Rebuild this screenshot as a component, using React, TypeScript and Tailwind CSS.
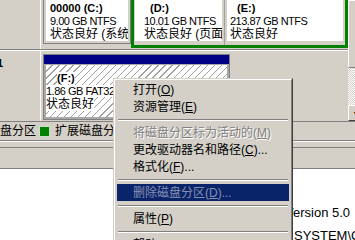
import React from "react";

type Item = {
  label?: string;
  hot?: string;
  dots?: boolean;
  disabled?: boolean;
  active?: boolean;
  sep?: boolean;
};

const menu: Item[] = [
  { label: "打开", hot: "O" },
  { label: "资源管理", hot: "E" },
  { sep: true },
  { label: "将磁盘分区标为活动的", hot: "M", disabled: true },
  { label: "更改驱动器名和路径", hot: "C", dots: true },
  { label: "格式化", hot: "F", dots: true },
  { sep: true },
  { label: "删除磁盘分区", hot: "D", dots: true, disabled: true, active: true },
  { sep: true },
  { label: "属性", hot: "P" },
  { sep: true },
  { label: "帮助", hot: "H" },
];

function ContextMenu() {
  return (
    <div className="absolute left-[113px] top-[78px] w-[180px] border border-t-[#d4d0c8] border-l-[#d4d0c8] border-r-[#404040] border-b-[#404040] bg-[#d4d0c8]">
      <div className="border border-t-white border-l-white border-r-[#808080] border-b-[#808080] px-[2px] pt-[1px] pb-[20px]">
        {menu.map((m, i) =>
          m.sep ? (
            <div key={i} className="h-[9px] flex items-center px-[1px]">
              <div className="w-full h-[2px] border-t border-t-[#808080] border-b border-b-white" />
            </div>
          ) : (
            <div
              key={i}
              className={
                "h-[17px] flex items-center pl-[16px] text-[12px] leading-none whitespace-nowrap " +
                (m.active
                  ? "bg-[#0a246a] text-[#8790b0]"
                  : m.disabled
                  ? "text-[#808080] [text-shadow:1px_1px_0_#ffffff]"
                  : "text-black")
              }
            >
              {m.label}(<u>{m.hot}</u>){m.dots ? "..." : ""}
            </div>
          )
        )}
      </div>
    </div>
  );
}

function Scrollbar() {
  return (
    <div className="w-[16px] shrink-0 flex flex-col">
      <div className="h-[68px] bg-[#d4d0c8] border-l border-t border-l-white border-t-white border-r border-b border-r-[#404040] border-b-[#808080]" />
      <div className="flex-1 bg-[image:repeating-conic-gradient(#ffffff_0%_25%,#d4d0c8_0%_50%)] bg-[length:2px_2px]" />
      <div className="h-[16px] bg-[#d4d0c8] border-l border-t border-l-white border-t-white border-r border-b border-r-[#404040] border-b-[#404040] flex items-center justify-center text-[7px] leading-none text-black">
        ▼
      </div>
    </div>
  );
}

export default function App() {
  return (
    <div className="relative w-[355px] h-[240px] overflow-hidden bg-[#d4d0c8] font-['Liberation_Sans','Noto_Sans_CJK_SC',sans-serif] text-black">
      {/* graphical disk view */}
      <div className="flex h-[121px]">
        <div className="w-[348px] shrink-0 flex flex-col">
          {/* disk 0 (bottom part) */}
          <div className="flex h-[50px] border-b border-[#808080]">
            <div className="w-[41px] shrink-0 border-r border-white" />
            <div className="ml-[2px] flex items-start">
              <div className="w-[88px] h-[44px] border-x border-b border-[#808080] px-[2px] pb-[2px]">
                <div className="h-full bg-white pl-[4px] pt-[2px] overflow-hidden whitespace-nowrap">
                  <div className="h-[13px] leading-[13px] text-[11px] font-bold">00000 (C:)</div>
                  <div className="h-[13px] leading-[13px] text-[11px] tracking-[-0.5px]">9.00 GB NTFS</div>
                  <div className="h-[13px] leading-[13px] text-[12px]">状态良好 (系统)</div>
                </div>
              </div>
              <div className="w-[217px] h-[48px] border-x-[3px] border-b-[3px] border-[#008000] flex">
                <div className="w-[90px] pl-[1px] pr-[2px] pb-[4px]">
                  <div className="h-full bg-white pl-[9px] pt-[2px] overflow-hidden whitespace-nowrap">
                    <div className="h-[13px] leading-[13px] text-[11px] font-bold ml-[6px]">(D:)</div>
                    <div className="h-[13px] leading-[13px] text-[11px] tracking-[-0.5px]">10.01 GB NTFS</div>
                    <div className="h-[13px] leading-[13px] text-[12px]">状态良好 (页面文件)</div>
                  </div>
                </div>
                <div className="flex-1 border-l border-[#a0a0a0] pl-[2px] pr-[2px] pb-[4px]">
                  <div className="h-full bg-white pl-[3px] pt-[2px] overflow-hidden whitespace-nowrap">
                    <div className="h-[13px] leading-[13px] text-[11px] font-bold ml-[7px]">(E:)</div>
                    <div className="h-[13px] leading-[13px] text-[11px] tracking-[-0.5px]">213.87 GB NTFS</div>
                    <div className="h-[13px] leading-[13px] text-[12px]">状态良好</div>
                  </div>
                </div>
              </div>
            </div>
          </div>
          {/* disk 1 */}
          <div className="flex flex-1 border-t border-white">
            <div className="w-[41px] shrink-0 border-r border-white overflow-hidden pt-[6px] whitespace-nowrap">
              <div className="-ml-[28px] h-[13px] leading-[13px] text-[11px] font-bold">磁盘 1</div>
            </div>
            <div className="ml-[2px] mt-[3px] w-[187px] h-[66px] border border-[#808080] flex flex-col">
              <div className="h-[9px] bg-[#000084]" />
              <div className="flex-1 bg-[#a8a8a8] px-[2px] pt-[1px] pb-[2px]">
                <div className="h-full bg-[image:repeating-linear-gradient(135deg,#ffffff_0px,#ffffff_4px,#a0a0a0_4px,#a0a0a0_5px)] pt-[7px] overflow-hidden whitespace-nowrap">
                  <div className="h-[13px] leading-[13px] text-[11px] font-bold ml-[11px]"><span className="bg-white">(F:)</span></div>
                  <div className="h-[13px] leading-[13px] text-[11px] tracking-[-0.5px]"><span className="bg-white">1.86 GB FAT32</span></div>
                  <div className="h-[13px] leading-[13px] text-[12px]"><span className="bg-white">状态良好</span></div>
                </div>
              </div>
            </div>
          </div>
        </div>
        <Scrollbar />
      </div>

      {/* legend */}
      <div className="h-[20px] border-t border-b border-[#808080] flex items-center whitespace-nowrap text-[12px] leading-none overflow-hidden">
        <span className="-ml-[24px]">主磁盘分区</span>
        <span className="ml-[3px] w-[11px] h-[11px] shrink-0 bg-[#008000] border border-[#c8e0c8]" />
        <span className="ml-[5px]">扩展磁盘分区</span>
      </div>
      <div className="h-[7px] border-t border-white border-b border-b-[#808080]" />
      <div className="h-[20px]" />

      {/* lower pane */}
      <div className="h-[72px] bg-white border-t border-[#808080] pt-[36px] text-[13px] whitespace-nowrap">
        <div className="h-[23px] leading-[16px] pl-[285px]">Version 5.0</div>
        <div className="h-[16px] leading-[16px] pl-[294px]">SYSTEM\CurrentControlSet</div>
      </div>

      <ContextMenu />
    </div>
  );
}
